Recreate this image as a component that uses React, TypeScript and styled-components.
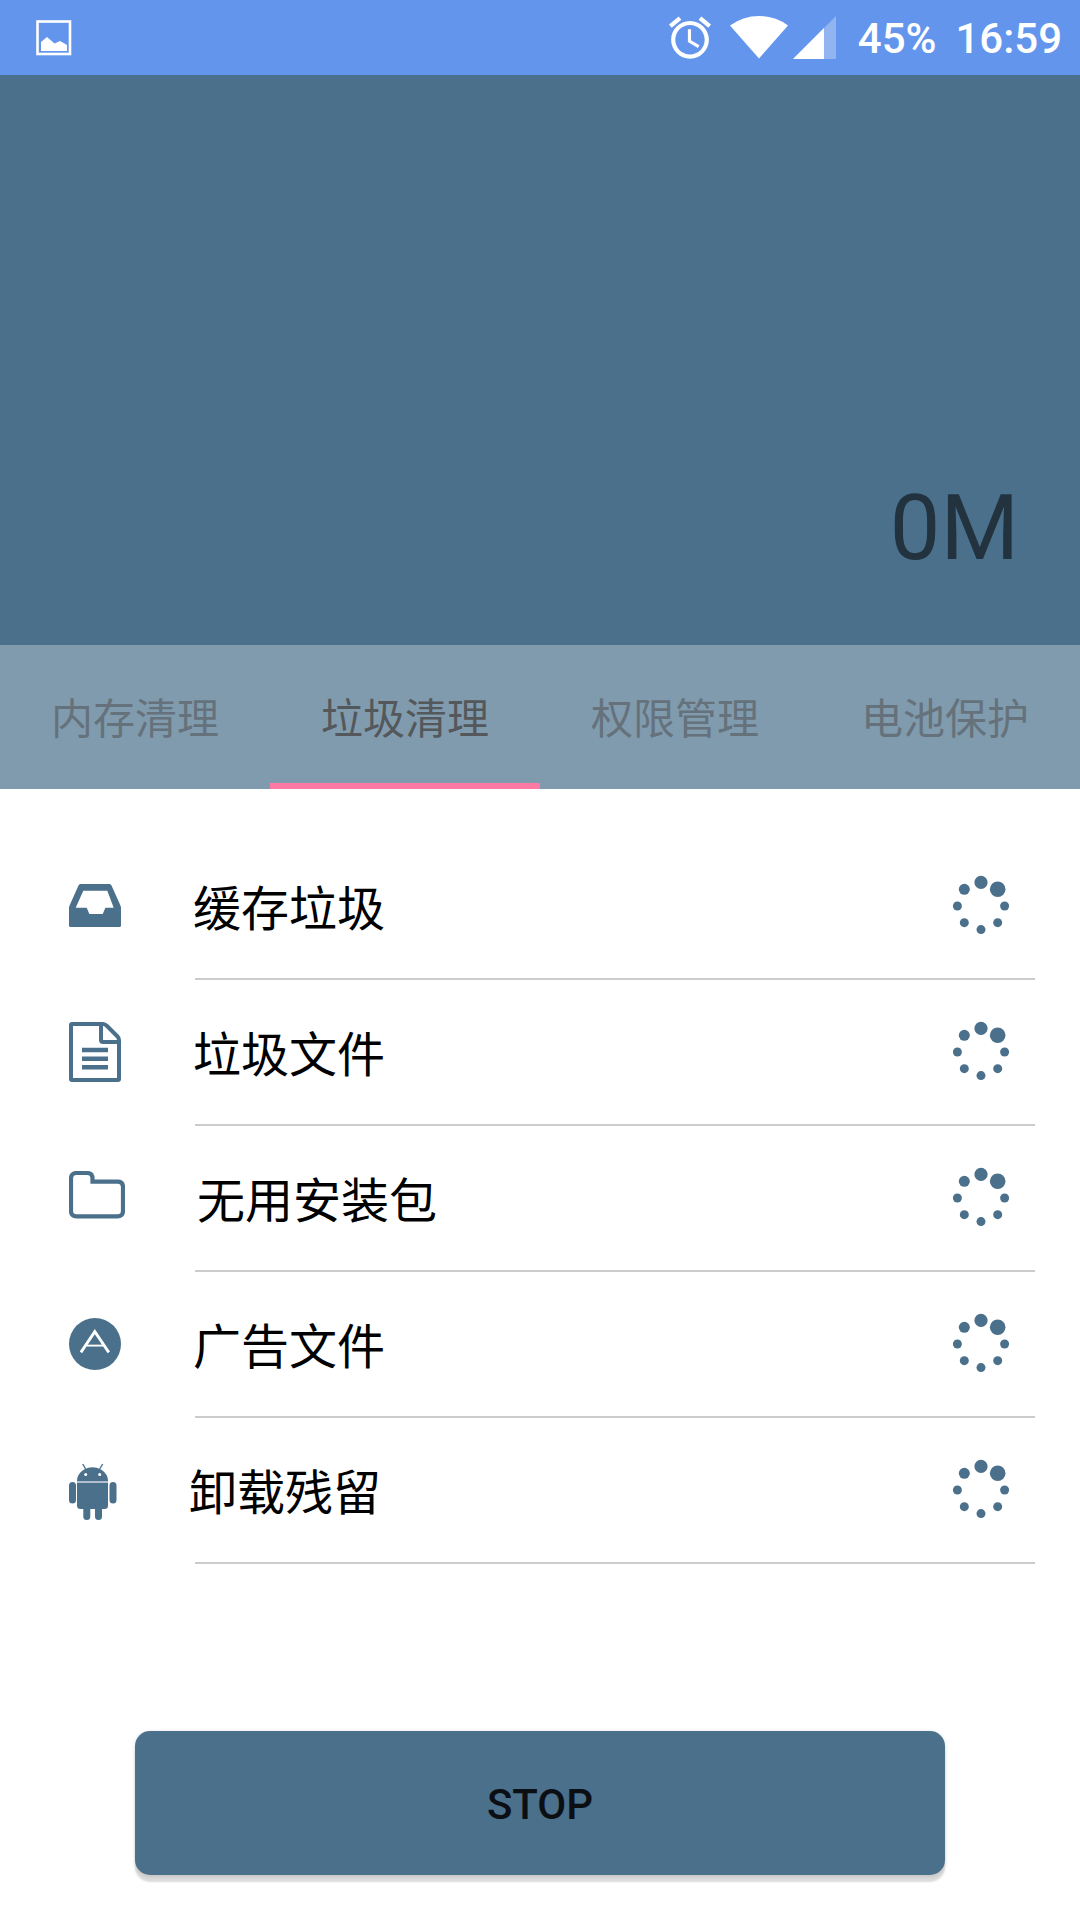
import React, { useState } from "react";
import styled, { createGlobalStyle } from "styled-components";

const slate = "#4b708b";

const GlobalStyle = createGlobalStyle`
  *, *::before, *::after { box-sizing: border-box; }
  body {
    margin: 0;
    background: #fff;
    font-family: Roboto, "Noto Sans CJK SC", sans-serif;
  }
  svg { display: block; flex: none; }
`;

const Screen = styled.div`
  display: flex;
  flex-direction: column;
  min-height: 100vh;
`;

const StatusBar = styled.header`
  display: flex;
  align-items: center;
  justify-content: space-between;
  height: 75px;
  padding: 0 18px 0 36px;
  background: #6495ed;
  color: #fff;
`;

const StatusGroup = styled.div<{ $gap: number }>`
  display: flex;
  align-items: center;
  gap: ${(p) => p.$gap}px;
`;

const StatusText = styled.span`
  padding-top: 3px;
  font-size: 42px;
  font-weight: 500;
  line-height: 48px;
`;

const Hero = styled.section`
  display: flex;
  align-items: flex-end;
  justify-content: flex-end;
  height: 570px;
  padding: 0 61px 62px;
  background: ${slate};
`;

const Amount = styled.span`
  font-size: 90px;
  line-height: 108px;
  color: #22333f;
`;

const Tabs = styled.div`
  display: grid;
  grid-template-columns: repeat(4, 1fr);
  height: 144px;
  background: #819bae;
`;

const Tab = styled.button<{ $active: boolean }>`
  padding: 12px 0 0;
  border: 0;
  border-bottom: 6px solid ${(p) => (p.$active ? "#ff79a5" : "transparent")};
  background: none;
  font: inherit;
  font-size: 42px;
  line-height: 60px;
  color: ${(p) => (p.$active ? "#54585b" : "#65727b")};
`;

const List = styled.ul`
  margin: 0;
  padding: 45px 0;
  list-style: none;
`;

const Row = styled.div`
  display: flex;
  align-items: center;
  gap: 72px;
  height: 144px;
  padding: 0 67px 0 69px;
`;

const Label = styled.span`
  flex: 1;
  padding-top: 8px;
  font-size: 48px;
  line-height: 72px;
  color: #000;
`;

const Divider = styled.div`
  height: 2px;
  margin: 0 45px 0 195px;
  background: #ccc;
`;

const Footer = styled.footer`
  margin-top: auto;
  padding: 0 12.5% 45px;
`;

const StopButton = styled.button`
  display: block;
  width: 100%;
  height: 144px;
  padding: 3px 0 0;
  border: 0;
  border-radius: 15px;
  background: ${slate};
  box-shadow: 0 7px 2px rgba(0, 0, 0, 0.14), 0 1px 4px rgba(0, 0, 0, 0.14);
  font: inherit;
  font-size: 42px;
  font-weight: 500;
  line-height: 48px;
  color: #0b0f14;
`;

const PictureIcon = () => (
  <svg width="36" height="36" viewBox="0 0 36 36" aria-hidden="true">
    <rect x="1.5" y="1.5" width="32.5" height="32.5" fill="none" stroke="#fff" strokeWidth="2.6" />
    <path d="M5 31V22l6-5 7.500 6.500 5.500-2.500 7 4V31z" fill="#fff" />
  </svg>
);

const AlarmIcon = () => (
  <svg width="42" height="43" viewBox="2 1.7 20 20.4" fill="#fff" aria-hidden="true">
    <path d="M22 5.720l-4.600-3.860-1.290 1.530 4.600 3.860L22 5.720zM7.880 3.390L6.600 1.860 2 5.710l1.290 1.530 4.590-3.850zM12.500 8H11v6l4.750 2.850.75-1.230-4-2.370V8zM12 4c-4.970 0-9 4.030-9 9s4.020 9 9 9c4.970 0 9-4.030 9-9s-4.030-9-9-9zm0 16c-3.870 0-7-3.130-7-7s3.130-7 7-7 7 3.130 7 7-3.130 7-7 7z" />
  </svg>
);

const WifiIcon = () => (
  <svg width="58" height="43" viewBox="0 0 58 43" fill="#fff" aria-hidden="true">
    <path d="M0 9.500Q13 0 29 0t29 9.500L29 42.500z" />
  </svg>
);

const SignalIcon = () => (
  <svg width="43" height="43" viewBox="0 0 43 43" fill="#fff" aria-hidden="true">
    <path d="M0 43L43 0v43z" opacity="0.3" />
    <path d="M0 43L31 12v31z" />
  </svg>
);

const InboxIcon = () => (
  <svg width="52" height="44" viewBox="0 0 52 44" fill={slate} aria-hidden="true">
    <path
      fillRule="evenodd"
      d="M11.500 0h29q1.500 0 2 1.500l8.500 19q1 2 1 4V41.500q0 1.500-1.500 1.500h-49Q0 43 0 41.500V24.500q0-2 1-4l8.500-19Q10 0 11.500 0zM14.300 6.700L6.700 23.700h11l2.700 6.300h13.300l2.700-6.300h8.300L38.300 6.700z"
    />
  </svg>
);

const DocumentIcon = () => (
  <svg width="52" height="60" viewBox="0 0 52 60" fill="none" stroke={slate} strokeWidth="4" aria-hidden="true">
    <path d="M3 2H34q2 0 4 2L48.500 14.500Q50 16 50 18V57q0 1-1 1H3q-1 0-1-1V3q0-1 1-1z" />
    <path d="M32 2V18q0 2 2 2H50" />
    <path d="M13 28H39M13 36.700H39M13 45.300H39" strokeWidth="4.4" />
  </svg>
);

const FolderIcon = () => (
  <svg width="56" height="54" viewBox="0 0 56 54" fill="none" stroke={slate} strokeWidth="4.2" aria-hidden="true">
    <path d="M7.500 2H18q5.500 0 5.500 5.500V10.700H48.500q5.500 0 5.500 5.500V40q0 5.300-5.500 5.300H7.500Q2 45.300 2 40V7.500Q2 2 7.500 2z" />
  </svg>
);

const CompassIcon = () => (
  <svg width="52" height="52" viewBox="0 0 52 52" fill="none" stroke="#fff" aria-hidden="true">
    <circle cx="26" cy="26" r="26" fill={slate} stroke="none" />
    <path d="M11.900 34.400L25.800 13.600L39.800 34.400" strokeWidth="2.8" />
    <path d="M17.500 27.600H34" strokeWidth="1.9" />
  </svg>
);

const AndroidIcon = () => (
  <svg width="48" height="60" viewBox="0 -4 48 60" fill={slate} aria-hidden="true">
    <path d="M8 17Q8 10 15 5.500Q23.500 1 32 5.500Q39 10 39 17z" />
    <path d="M13.700 0l3 5M33.700 0l-3 5" stroke={slate} strokeWidth="1.4" />
    <path d="M8 18H39" stroke="#b3bfce" strokeWidth="2" />
    <path d="M8 19H39V41.500q0 3.500-3.500 3.500h-24Q8 45 8 41.500z" />
    <rect x="0" y="18" width="7" height="21.500" rx="3.500" />
    <rect x="40.500" y="18" width="7" height="21.500" rx="3.500" />
    <rect x="14.300" y="40" width="7" height="16" rx="3.500" />
    <rect x="26" y="40" width="7" height="16" rx="3.500" />
    <circle cx="16.700" cy="10.500" r="1.500" fill="#fff" />
    <circle cx="30.700" cy="10.500" r="1.500" fill="#fff" />
  </svg>
);

const dotRadii = [6.6, 7.8, 4.5, 4.5, 4.5, 4.5, 4.5, 5.5];

const Spinner = () => (
  <svg width="64" height="64" viewBox="-32 -32 64 64" fill={slate} aria-hidden="true">
    {dotRadii.map((r, i) => {
      const angle = (i * Math.PI) / 4;
      return <circle key={i} cx={23.6 * Math.sin(angle)} cy={-23.6 * Math.cos(angle)} r={r} />;
    })}
  </svg>
);

const tabs = ["内存清理", "垃圾清理", "权限管理", "电池保护"];

const items = [
  { label: "缓存垃圾", Icon: InboxIcon },
  { label: "垃圾文件", Icon: DocumentIcon },
  { label: "无用安装包", Icon: FolderIcon },
  { label: "广告文件", Icon: CompassIcon },
  { label: "卸载残留", Icon: AndroidIcon },
];

export default function App() {
  const [active, setActive] = useState(1);

  return (
    <Screen lang="zh-CN">
      <GlobalStyle />
      <StatusBar>
        <PictureIcon />
        <StatusGroup $gap={22}>
          <StatusGroup $gap={19}>
            <AlarmIcon />
            <StatusGroup $gap={5}>
              <WifiIcon />
              <SignalIcon />
            </StatusGroup>
          </StatusGroup>
          <StatusGroup $gap={19}>
            <StatusText>45%</StatusText>
            <StatusText>16:59</StatusText>
          </StatusGroup>
        </StatusGroup>
      </StatusBar>
      <Hero>
        <Amount>0M</Amount>
      </Hero>
      <Tabs role="tablist">
        {tabs.map((name, i) => (
          <Tab
            key={name}
            type="button"
            role="tab"
            aria-selected={i === active}
            $active={i === active}
            onClick={() => setActive(i)}
          >
            {name}
          </Tab>
        ))}
      </Tabs>
      <List>
        {items.map(({ label, Icon }) => (
          <li key={label}>
            <Row>
              <Icon />
              <Label>{label}</Label>
              <Spinner />
            </Row>
            <Divider />
          </li>
        ))}
      </List>
      <Footer>
        <StopButton type="button">STOP</StopButton>
      </Footer>
    </Screen>
  );
}
